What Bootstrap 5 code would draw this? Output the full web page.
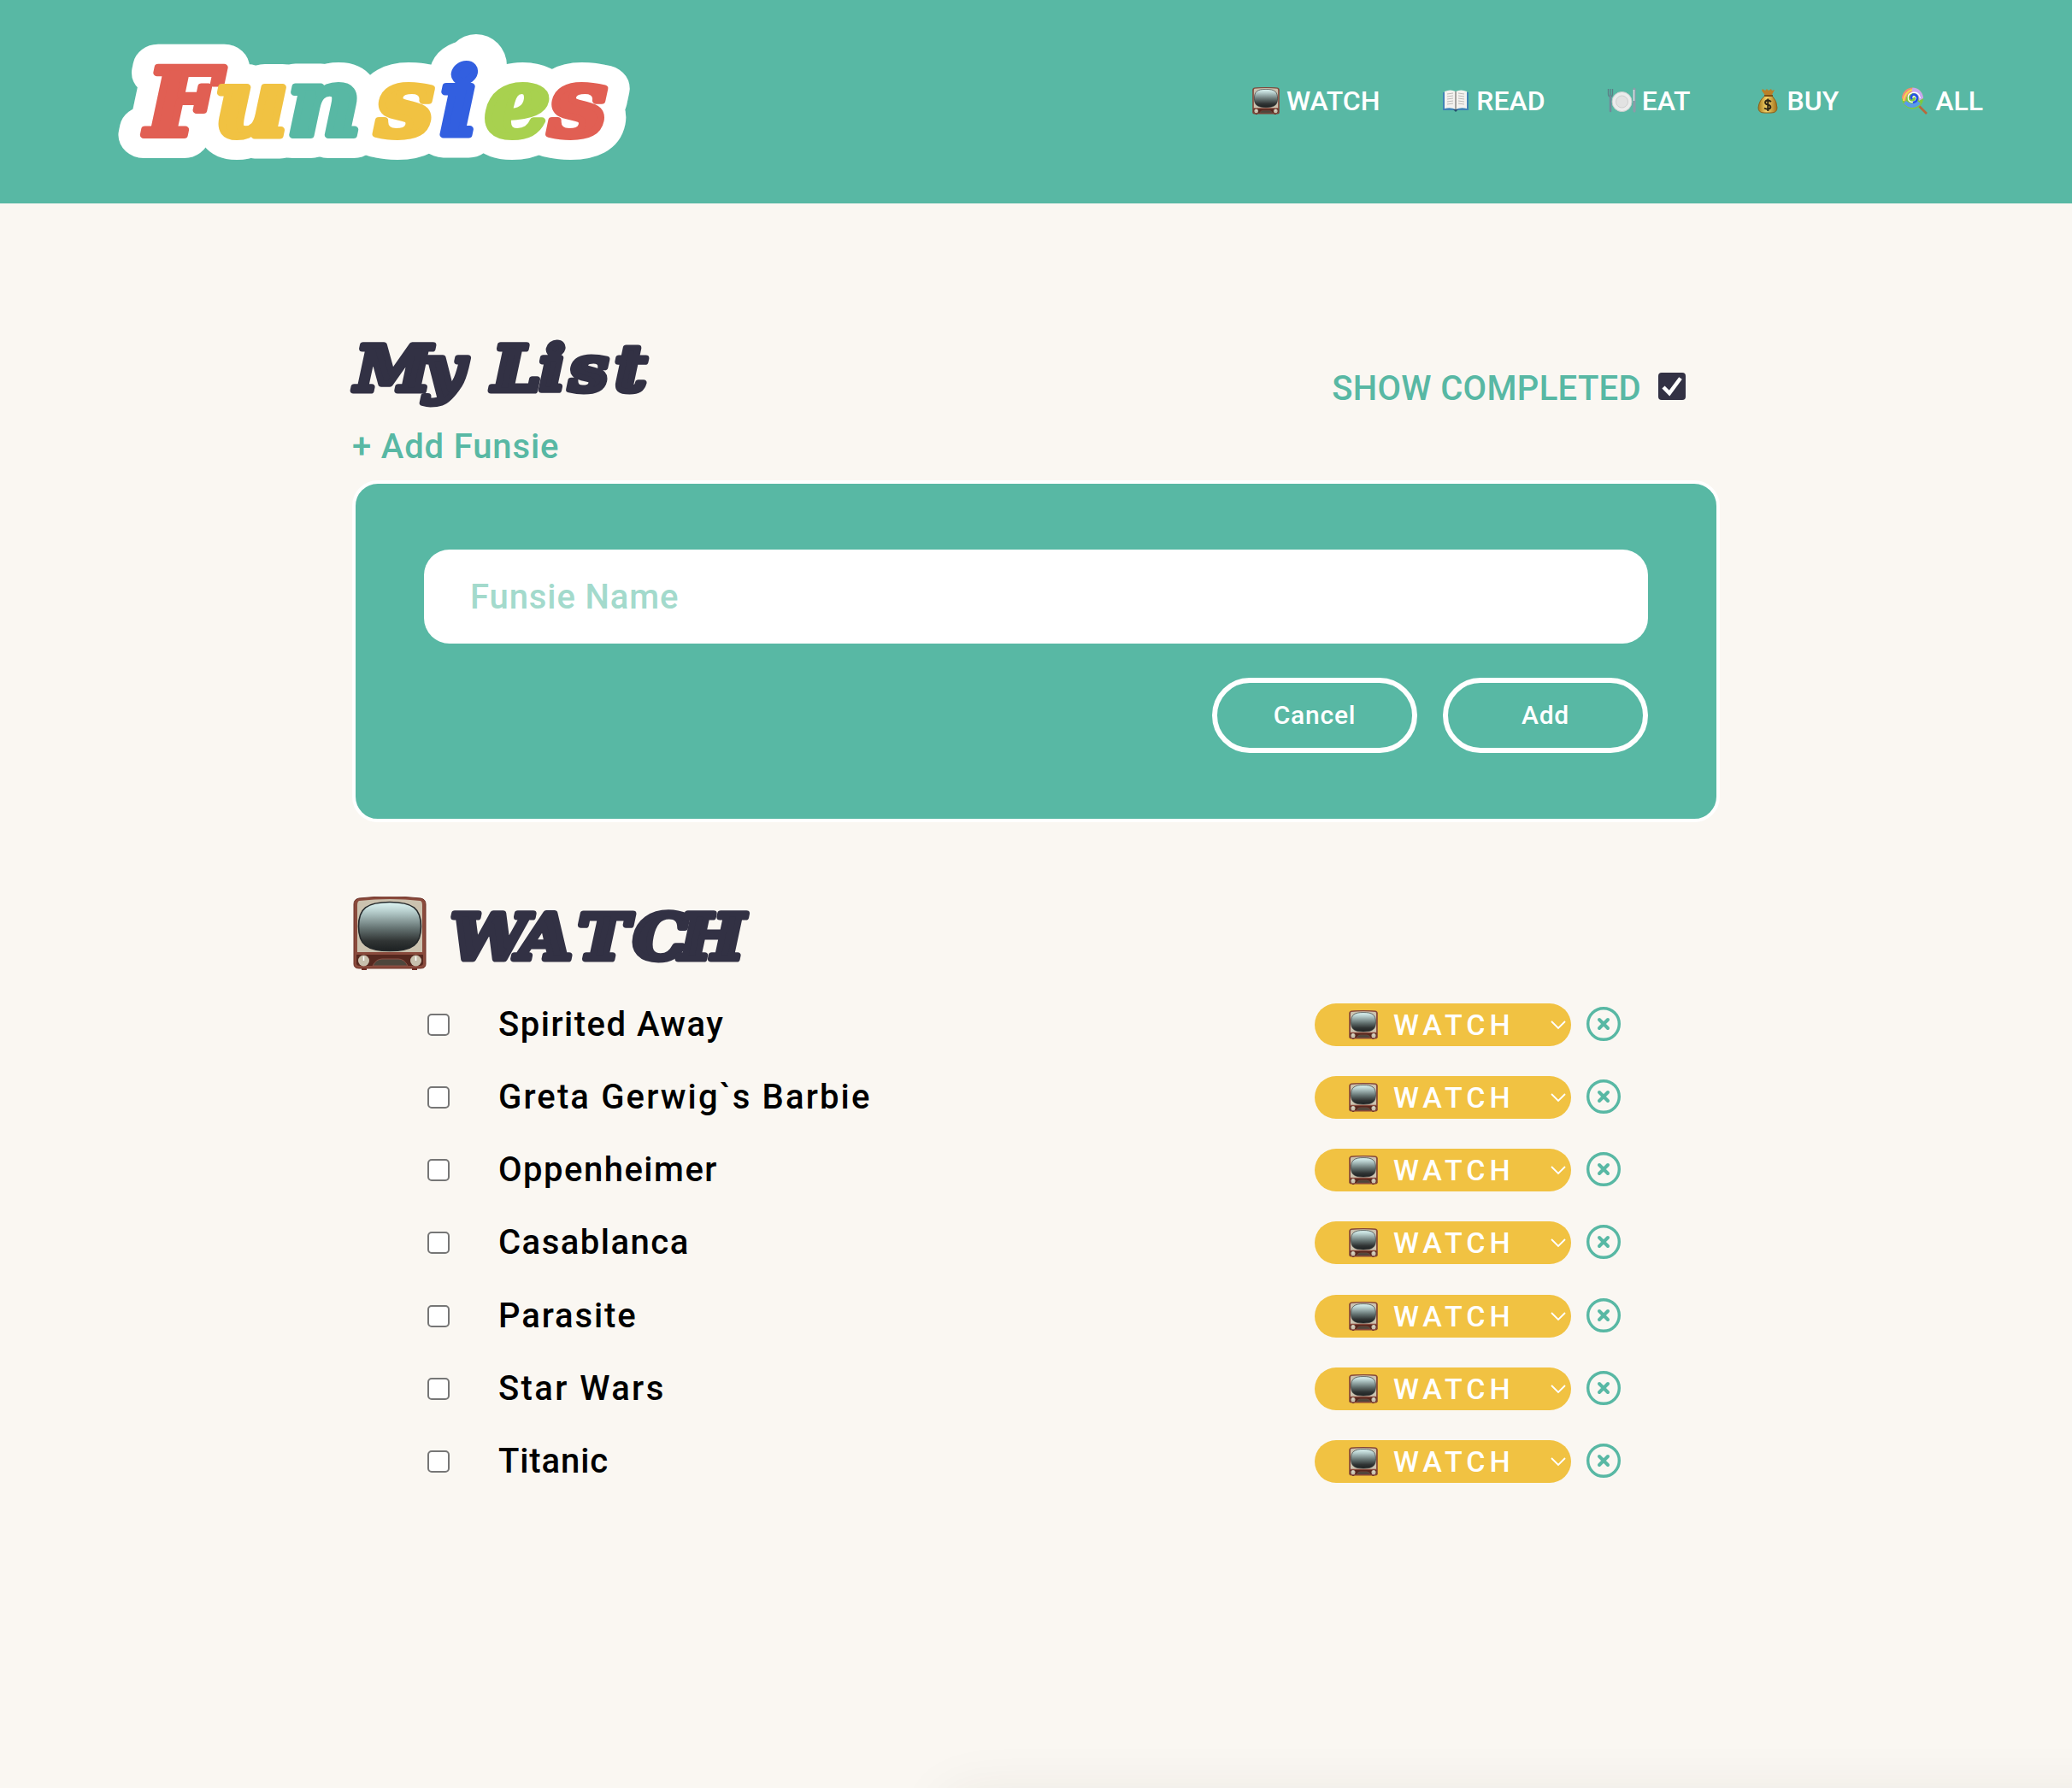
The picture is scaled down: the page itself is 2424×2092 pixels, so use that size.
<!DOCTYPE html>
<html lang="en">
<head>
<meta charset="utf-8">
<title>Funsies</title>
<link href="https://cdn.jsdelivr.net/npm/bootstrap@5.3.0/dist/css/bootstrap.min.css" rel="stylesheet">
<style>
:root{--teal:#58b8a4;--navy:#323144;--sun:#f1c242;--paper:#faf7f2}
body{background:var(--paper);font-family:Roboto,"Liberation Sans",sans-serif;font-weight:500;font-size:40px;line-height:1;color:#000;height:2092px;overflow:hidden}
svg{display:block;overflow:visible;flex:none}
.topbar{background:var(--teal);height:238px;padding:0 104px 0 120px}
.menu{gap:72px;margin-top:-2px}
.menu a{color:#fff;font-size:32px;text-decoration:none}
.menu svg{width:34px;height:34px;margin-right:7px}
.display-serif{font-family:"DejaVu Serif","Liberation Serif",serif;font-weight:700;font-style:italic}
.headline{fill:var(--navy);stroke:var(--navy);stroke-width:7px;stroke-linejoin:round;font-size:73px}
.wordmark{stroke-width:var(--edge,8px);stroke-linejoin:round;font-size:108px}
.c-red{fill:var(--ink,#e15f53);stroke:var(--ink,#e15f53)}
.c-sun{fill:var(--ink,#f1c242);stroke:var(--ink,#f1c242)}
.c-teal{fill:var(--ink,#58b8a4);stroke:var(--ink,#58b8a4)}
.c-blue{fill:var(--ink,#325fe0);stroke:var(--ink,#325fe0)}
.c-lime{fill:var(--ink,#a8d14f);stroke:var(--ink,#a8d14f)}
.backing{--ink:#fff;--edge:54px}
.sheet{width:1600px;margin:0 auto}
.list-head{height:324px}
.teal-text{color:var(--teal)}
.add-link{padding:24px 0 19px;letter-spacing:.85px}
.toggle{margin:0 40px 87px 0;letter-spacing:.33px}
.toggle span{margin:5px 20px 0 0}
.toggle svg{margin-top:-1px}
.panel{background:var(--teal);border:4px solid #fff;border-radius:30px;height:400px;padding:77px 80px}
.name-box{height:110px;border:0;border-radius:30px;padding:0 54px;font-size:40px;font-weight:500;letter-spacing:.9px}
.name-box::placeholder{color:#a3dacc;opacity:1}
.actions{gap:30px;margin-top:40px}
.pill-btn{width:240px;height:88px;border:6px solid #fff;border-radius:44px;color:#fff;font-size:30px;font-weight:500;padding:0 0 2px;letter-spacing:.8px}
.item{height:85.25px;padding-left:88px;padding-right:116px}
.tick{width:26px;height:26px;border:2px solid #767676;border-radius:5px;background:#fff;margin:0 57px 0 0;flex:none;appearance:none}
.kind{width:300px;height:50px;border-radius:25px;background:var(--sun);color:#fff;font-size:34px;padding:0 6px 0 40px}
.kind span{margin:0 auto 0 18px;letter-spacing:5.1px}
.kind+svg{margin:0 0 2px 18px}
.dock-edge{height:100px;overflow:hidden;flex:none}
.dock{height:200px;margin:112px -100px 0 1110px;box-shadow:0 0 70px rgba(50,45,30,.09)}
</style>
<script src="https://cdn.jsdelivr.net/npm/bootstrap@5.3.0/dist/js/bootstrap.bundle.min.js"></script>
</head>
<body class="d-flex flex-column">
<svg width="0" height="0" class="position-absolute">
<defs>
<linearGradient id="glass" x1="0" y1="0" x2="0" y2="1"><stop offset="0" stop-color="#dff7f5"/><stop offset=".2" stop-color="#b5cccb"/><stop offset=".55" stop-color="#62706f"/><stop offset=".8" stop-color="#303434"/><stop offset="1" stop-color="#1d2122"/></linearGradient>
<linearGradient id="gold" x1="0" x2="1"><stop offset="0" stop-color="#a8781d"/><stop offset=".45" stop-color="#f6d56b"/><stop offset="1" stop-color="#a06d17"/></linearGradient>
<symbol id="tv" viewBox="0 0 86 86">
<path d="M10 82h6v4h-6zM69 82h6v4h-6z" fill="#6e2f26"/>
<path d="M7 2Q43-2 79 2Q85 3 85 9V79Q85 84 79 84H7Q1 84 1 79V9Q1 3 7 2Z" fill="#8a4a3c" stroke="#6e3228" stroke-width="1"/>
<path d="M7 5Q43 1 79 5Q81 6 81 10V65H5V10Q5 6 7 5Z" fill="#cbc2af"/>
<path d="M43 6.500C70 6.500 79.500 14 79.500 35S70 63.500 43 63.500S6.500 56 6.500 35S16 6.500 43 6.500Z" fill="url(#glass)" stroke="#25292b" stroke-width="1.6"/>
<path d="M4 68H82V78Q82 81 78 81H8Q4 81 4 78Z" fill="#56281f"/>
<path d="M23 81Q27 73 34 73H53Q60 73 64 81Z" fill="#4e463c" stroke="#8a5146" stroke-width="1"/>
<circle cx="12.500" cy="75" r="6.500" fill="#c8c0ad"/><circle cx="73.500" cy="75" r="6.500" fill="#c8c0ad"/>
<path d="M12.500 70v5M73.500 70v5" stroke="#fff" stroke-width="1.500"/>
</symbol>
</defs>
</svg>

<header class="topbar d-flex align-items-center justify-content-between">
<svg width="640" height="200" viewBox="120 19 640 200" class="display-serif" aria-label="Funsies">
<use href="#word" class="backing"/><ellipse cx="557" cy="77" rx="36" ry="37" fill="#fff"/>
<g id="word"><text class="wordmark" transform="scale(1.1 1)" y="158.500"><tspan x="155.5" class="c-red">F</tspan><tspan x="228" class="c-sun">u</tspan><tspan x="305.5" class="c-teal">n</tspan><tspan x="400" class="c-sun">s</tspan><tspan x="468" class="c-blue">i</tspan><tspan x="516" class="c-lime">e</tspan><tspan x="584" class="c-red">s</tspan></text></g>
</svg>
<nav class="menu d-flex align-items-center">
<a href="#" class="d-flex align-items-center"><svg><use href="#tv" x="1" y="1" width="32" height="32"/></svg><span>WATCH</span></a>
<a href="#" class="d-flex align-items-center"><svg viewBox="0 0 34 34"><path d="M2 7H32V28H2Z" fill="#3f83b5"/><path d="M14 27H20L17 30Z" fill="#27506f"/><path d="M4 6Q11 3 17 6Q23 3 30 6V26Q23 24 17 27Q11 24 4 26Z" fill="#f4f2ef"/><path d="M17 6V27" stroke="#8e8b88" stroke-width="1.500"/><path d="M7 9l7-1M7 12l7-1M7 15l7-1M7 18l7-1M7 21l7-1M20 8l7 1M20 11l7 1M20 14l7 1M20 17l7 1M20 20l7 1" stroke="#bdbbb9"/></svg><span>READ</span></a>
<a href="#" class="d-flex align-items-center"><svg viewBox="0 0 34 34"><circle cx="17.500" cy="18" r="11.500" fill="#ececec" stroke="#c9cccc"/><circle cx="17.500" cy="18" r="7" fill="#e2e2e2" stroke="#cfcfcf"/><path d="M1.500 3V9Q1.500 12 4 12T6.500 9V3M4 3V12" fill="none" stroke="#5b7f86" stroke-width="1.300"/><path d="M4 12V29" stroke="#72899a" stroke-width="2.500" stroke-linecap="round"/><path d="M32 3V29" stroke="#8a9ba8" stroke-width="3" stroke-linecap="round"/><path d="M31.500 4V17" stroke="#d9e0e4" stroke-width="1.500"/></svg><span>EAT</span></a>
<a href="#" class="d-flex align-items-center"><svg viewBox="-2 0 34 34"><path d="M10 3l3 2 2-2 2 2 3-2 1 2 3-1-4 8H14L9 5Z" fill="#b9812a"/><path d="M13 11H21Q27 17 27 25Q27 31 20 31H12Q5 31 5 25Q6 16 13 11Z" fill="url(#gold)" stroke="#8b621b"/><path d="M12 11H22" stroke="#7b4d13" stroke-width="2"/><path d="M20 18Q16 15 13.500 17.500Q12 20.500 16 21.500Q20.500 22.500 19 25.500Q16 28 12 25.500M16.300 14.500V29" fill="none" stroke="#2c2413" stroke-width="2"/></svg><span>BUY</span></a>
<a href="#" class="d-flex align-items-center"><svg viewBox="0 0 34 34"><path d="M21 22L31 32" stroke="#b8683a" stroke-width="2.600"/><circle cx="14.500" cy="14" r="12.500" fill="#7fca3c"/><path d="M2 14A12.500 12.500 0 0 1 14.500 1.500L17 7Q7 7 6 18Z" fill="#f08c7c"/><path d="M14.500 1.500A12.500 12.500 0 0 1 27 14L22 17Q22 8 13 6Z" fill="#c8a8f0"/><path d="M4 20Q8 25 14 25Q20 25 24 20L20 17Q14 23 7 17Z" fill="#5a9be8"/><path d="M14.500 14Q15 11 17.500 12Q20 14 17 17.500Q12 20 9.500 15.500Q8 9 14 7.500Q22 6 23.500 14" fill="none" stroke="#fff" stroke-width="1.300"/><path d="M14 15Q11 12 15 9.500Q19 9 20 13Q20 18 15 19" fill="none" stroke="#2450e8" stroke-width="2.600"/><path d="M4 17Q5 7 14 4" fill="none" stroke="#f6d84c" stroke-width="2"/></svg><span>ALL</span></a>
</nav>
</header>

<main class="sheet">
<div class="list-head d-flex justify-content-between align-items-end">
<div>
<h1 class="m-0"><svg width="360" height="90" viewBox="411 389 360 90" class="display-serif"><text class="headline" transform="scale(1.1 1)" y="457" x="377 450 491 523 572.5 604.5 653">My List</text></svg></h1>
<div class="teal-text add-link">+ Add Funsie</div>
</div>
<label class="teal-text toggle d-flex align-items-center"><span>SHOW COMPLETED</span><svg width="32" height="32" viewBox="0 0 32 32"><rect width="32" height="32" rx="4" fill="#323144"/><path d="M6 17L13 24L26 6.500" fill="none" stroke="#fff" stroke-width="4.500"/></svg></label>
</div>
<section class="panel">
<input class="form-control name-box" placeholder="Funsie Name">
<div class="actions d-flex justify-content-end">
<button class="btn pill-btn">Cancel</button><button class="btn pill-btn">Add</button>
</div>
</section>
<h2 class="d-flex m-0" style="padding-top:87px"><svg width="86" height="86" style="margin-left:1px"><use href="#tv"/></svg><svg width="360" height="86" viewBox="499 1049 360 86" class="display-serif"><text class="headline" transform="scale(1.1 1)" y="1122.5" x="479 552 614.5 673.5 723">WATCH</text></svg></h2>
<div id="rows" style="padding-top:21px"></div>
</main>
<div class="dock-edge mt-auto"><div class="dock"></div></div>
<script>
const titles=[["Spirited Away",1.5],["Greta Gerwig`s Barbie",2.15],["Oppenheimer",1.5],["Casablanca",1.5],["Parasite",1.9],["Star Wars",2.4],["Titanic",.9]];
document.getElementById("rows").innerHTML=titles.map(([t,s])=>`<div class="item d-flex align-items-center"><input type="checkbox" class="tick"><span style="letter-spacing:${s}px">${t}</span><div class="kind d-flex align-items-center ms-auto"><svg width="34" height="34"><use href="#tv" width="34" height="34"/></svg><span>WATCH</span><svg width="18" height="12" viewBox="0 0 18 12"><path d="M1 2L9 10L17 2" fill="none" stroke="#fff" stroke-width="1.800"/></svg></div><svg width="40" height="40" viewBox="0 0 40 40" fill="none" stroke="#58b8a4"><circle cx="20" cy="20" r="18.300" stroke-width="3.400"/><path d="M15 15L25 25M25 15L15 25" stroke-width="4" stroke-linecap="round"/></svg></div>`).join("");
</script>
</body>
</html>
